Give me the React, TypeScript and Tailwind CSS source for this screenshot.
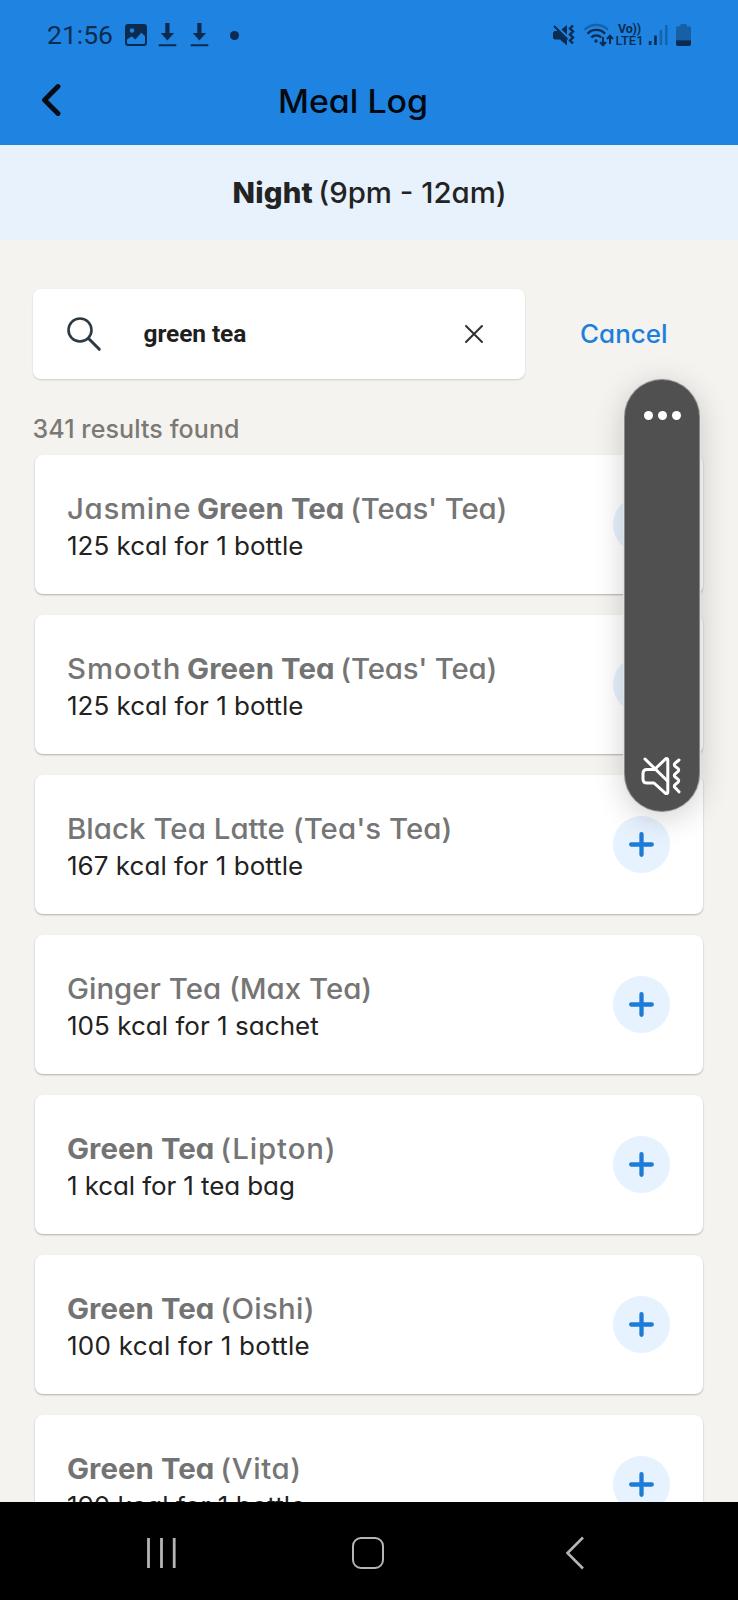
import type { ReactNode } from "react";

type Meal = { title: ReactNode; detail: string; tracking: string };

const Match = () => <b className="font-bold tracking-[0.05px] text-[#737373]">Green Tea</b>;

const meals: Meal[] = [
  {
    title: (
      <>
        <span className="tracking-[0.65px]">Jasmine</span>
        <Match />
        <span className="tracking-[-0.2px]">(Teas' Tea)</span>
      </>
    ),
    detail: "125 kcal for 1 bottle",
    tracking: "tracking-normal",
  },
  {
    title: (
      <>
        <span className="tracking-[0.95px]">Smooth</span>
        <Match />
        <span className="tracking-[-0.2px]">(Teas' Tea)</span>
      </>
    ),
    detail: "125 kcal for 1 bottle",
    tracking: "tracking-normal",
  },
  {
    title: <span className="tracking-[0.04px]">Black Tea Latte (Tea's Tea)</span>,
    detail: "167 kcal for 1 bottle",
    tracking: "tracking-[0.03px]",
  },
  {
    title: <span>Ginger Tea (Max Tea)</span>,
    detail: "105 kcal for 1 sachet",
    tracking: "tracking-[0.03px]",
  },
  {
    title: (
      <>
        <Match />
        <span className="tracking-[0.85px]">(Lipton)</span>
      </>
    ),
    detail: "1 kcal for 1 tea bag",
    tracking: "tracking-[-0.1px]",
  },
  {
    title: (
      <>
        <Match />
        <span className="tracking-[0.3px]">(Oishi)</span>
      </>
    ),
    detail: "100 kcal for 1 bottle",
    tracking: "tracking-[0.25px]",
  },
  {
    title: (
      <>
        <Match />
        <span className="tracking-[0.6px]">(Vita)</span>
      </>
    ),
    detail: "190 kcal for 1 bottle",
    tracking: "tracking-[0.05px]",
  },
];

function StatusBar() {
  return (
    <div className="flex h-[58px] items-center pt-[12px] pr-[47px] pl-[47px] text-[#0b2c50]">
      <span className="font-['Roboto',sans-serif] text-[26.500px] leading-none">21:56</span>
      <svg className="ml-[12px] h-[22px] w-[22px]" viewBox="0 0 22 22">
        <path
          fill="currentColor"
          fillRule="evenodd"
          d="M3 0h16a3 3 0 0 1 3 3v16a3 3 0 0 1-3 3H3a3 3 0 0 1-3-3V3a3 3 0 0 1 3-3ZM2 15.500V18.500a1.500 1.500 0 0 0 1.500 1.500h15a1.500 1.500 0 0 0 1.500-1.500V12l-3.700-3.200-6 6.700-3.600-3.200ZM7 4.200a2.300 2.300 0 1 0 0 4.600 2.300 2.300 0 0 0 0-4.600Z"
        />
      </svg>
      <div className="ml-[11px] flex gap-[13px]">
        {[0, 1].map((i) => (
          <svg key={i} className="h-[24px] w-[19px]" viewBox="0 0 19 24">
            <path fill="currentColor" d="M7.300 0h4.200v10H16l-6.600 7.500L2.800 10h4.500ZM.7 21.300h17.600v2H.7Z" />
          </svg>
        ))}
      </div>
      <span className="ml-[21px] h-[9px] w-[9px] rounded-full bg-[#0b2c50]" />

      <svg className="ml-auto h-[22px] w-[22px]" viewBox="0 0 22 22">
        <path fill="currentColor" d="M0 8.500 1.500 7H5L14 16v5.500L7 15.500H1.500L0 14ZM8.500 5.500 14 1v9.800Z" />
        <path d="m1 2 13.500 13.500" stroke="currentColor" strokeWidth="2" />
        <path d="m20 1.500-3 3 3 3-3 3 3 3-3 3 3 3" fill="none" stroke="currentColor" strokeWidth="2.400" />
      </svg>
      <svg className="ml-[8px] h-[24px] w-[31px]" viewBox="0 0 31 24" fill="none" stroke="currentColor">
        <path d="M1.500 6.700a16.500 16.500 0 0 1 23.500 0" strokeWidth="2.200" opacity=".4" />
        <path d="M4.500 10.700a12 12 0 0 1 17.500 0M8.300 14.500a7 7 0 0 1 10 0" strokeWidth="2.400" />
        <circle cx="13" cy="18" r="1.700" fill="currentColor" stroke="none" />
        <path d="M20 14v8M17 19l3 3.200 3-3.200M27 21v-8M24 16l3-3.200 3 3.200" strokeWidth="2" />
      </svg>
      <div className="ml-[2px] flex w-[27px] flex-col items-center font-['Roboto',sans-serif] text-[12.500px] leading-[12px] font-bold">
        <span className="tracking-[-0.2px] whitespace-nowrap">Vo))</span>
        <span className="text-[13px] font-medium">LTE1</span>
      </div>
      <svg className="ml-[5px] h-[22px] w-[20px]" viewBox="0 0 20 22" fill="currentColor">
        <path d="M.8 17h2.600v4H.8ZM6.200 11.500h2.600V21H6.200Z" />
        <path d="M11.600 6h2.600v15h-2.600ZM17 1h2.600v20H17Z" opacity=".35" />
      </svg>
      <svg className="ml-[8px] h-[22px] w-[15px]" viewBox="0 0 15 22" fill="currentColor">
        <path d="M4.500 0h6v2.200H13a2 2 0 0 1 2 2V16.200H0V4.200a2 2 0 0 1 2-2h2.500Z" opacity=".4" />
        <path d="M0 16.200h15V20a2 2 0 0 1-2 2H2a2 2 0 0 1-2-2Z" />
      </svg>
    </div>
  );
}

function MealCard({ meal }: { meal: Meal }) {
  return (
    <li className="flex h-[139px] shrink-0 items-center justify-between rounded-[8px] bg-white pr-[33px] pl-[32px] shadow-[0_1px_2px_rgba(0,0,0,0.28)]">
      <div className="pt-[6px]">
        <div className="flex h-[36px] origin-left scale-x-105 gap-[5.500px] text-[28px] leading-[36px] font-[450] whitespace-pre text-[#757575]">
          {meal.title}
        </div>
        <div className={`mt-px origin-left scale-x-104 text-[25px] leading-[36px] font-[370] whitespace-nowrap text-[#222] ${meal.tracking}`}>
          {meal.detail}
        </div>
      </div>
      <button className="flex h-[57px] w-[57px] items-center justify-center rounded-full bg-[#e6f2fe]">
        <svg className="h-[25px] w-[25px]" viewBox="0 0 25 25">
          <path d="M12.500 2.200v20.600M2.200 12.500h20.600" stroke="#1c7cd6" strokeWidth="4.300" strokeLinecap="round" />
        </svg>
      </button>
    </li>
  );
}

function VolumePanel() {
  return (
    <div className="absolute top-[380px] left-[625px] flex h-[431px] w-[74px] flex-col items-center justify-between rounded-full bg-[#505050] pt-[31px] pb-[16px] shadow-[0_0_0_1px_#8a8a8a,0_0_0_2px_rgba(225,225,225,0.9),0_6px_32px_rgba(0,0,0,0.2)]">
      <div className="flex gap-[5px]">
        <span className="h-[9px] w-[9px] rounded-full bg-white" />
        <span className="h-[9px] w-[9px] rounded-full bg-white" />
        <span className="h-[9px] w-[9px] rounded-full bg-white" />
      </div>
      <svg className="mr-[2px] h-[38px] w-[40px]" viewBox="0 0 40 38" fill="none" stroke="#fff" strokeWidth="3" strokeLinecap="round" strokeLinejoin="round">
        <path d="M14 12.500H6c-3 0-4 1.500-4 4v5.500c0 2.500 1 4 4 4h7L24.500 36.300c1 .8 2.300.3 2.300-1V3c0-1.300-1.300-1.800-2.300-1L13.500 12.500" />
        <path d="M4 2 26.500 24" />
        <path d="m38 3-3.800 3.200q-1.800 1.600 0 3.200l2.600 2q1.800 1.600 0 3.200l-2.600 2.200q-1.800 1.600 0 3.200l2.600 2.200q1.800 1.600 0 3.200l-2.600 2.200q-1.800 1.600 0 3.200L38 34.800" />
      </svg>
    </div>
  );
}

export default function App() {
  return (
    <div className="relative flex h-[1600px] w-[738px] flex-col overflow-hidden bg-[#f4f3ef] font-['Inter',sans-serif] [font-feature-settings:'cv11','ss03']">
      <header className="h-[145px] shrink-0 bg-[#1e83e1]">
        <StatusBar />
        <div className="grid h-[87px] grid-cols-[84px_1fr_116px] items-center">
          <svg className="mt-[-4px] ml-[40px] h-[34px] w-[21px]" viewBox="0 0 21 34">
            <path d="M18 3.500 4.500 17 18 30.500" fill="none" stroke="#060b14" strokeWidth="4.900" strokeLinecap="round" strokeLinejoin="round" />
          </svg>
          <h1 className="scale-x-106 text-center text-[32px] leading-none font-medium text-[#04080f]">Meal Log</h1>
        </div>
      </header>

      <div className="flex h-[95px] shrink-0 items-center justify-center bg-[#e7f2fd] pl-[2px] text-[28px] leading-[36px] text-[#232323]">
        <p className="flex scale-x-105 gap-[5px]">
          <b className="font-extrabold tracking-[0.2px]">Night</b>
          <span className="font-[480]">(9pm - 12am)</span>
        </p>
      </div>

      <main className="flex min-h-0 flex-1 flex-col overflow-hidden px-[33px] pt-[49px]">
        <div className="flex h-[90px] shrink-0 items-center">
          <div className="flex h-[90px] w-[492px] items-center rounded-[8px] bg-white pr-[41px] pl-[33px] shadow-[0_1px_2px_rgba(0,0,0,0.16)]">
            <svg className="mt-[-1px] h-[36px] w-[36px]" viewBox="0 0 36 36" fill="none" stroke="#2b3a44" strokeWidth="2.600" strokeLinecap="round">
              <circle cx="14" cy="14" r="11.500" />
              <path d="m22.300 22.300 11 11" strokeWidth="3" />
            </svg>
            <span className="ml-[41.500px] font-['Roboto',sans-serif] text-[24.500px] leading-none font-bold tracking-[-0.1px] text-[#1f1f1f]">green tea</span>
            <svg className="ml-auto h-[20px] w-[20px]" viewBox="0 0 20 20">
              <path d="m2 2 16 16M18 2 2 18" stroke="#303030" strokeWidth="2" strokeLinecap="round" />
            </svg>
          </div>
          <button className="ml-[55px] origin-left scale-x-102 text-[25.500px] leading-none font-medium text-[#1c7fdb]">Cancel</button>
        </div>

        <p className="mt-[32px] -ml-[0.500px] h-[36px] shrink-0 text-[25px] leading-[36px] font-medium tracking-[0.1px] text-[#7b7974]">341 results found</p>

        <ul className="mt-[8px] mr-[2px] ml-[2px] flex flex-col gap-[21px]">
          {meals.map((meal, i) => (
            <MealCard key={i} meal={meal} />
          ))}
        </ul>
      </main>

      <nav className="flex h-[98px] shrink-0 items-center bg-black pt-[3px] text-[#b4b4b4]">
        <svg className="ml-[146px] h-[32px] w-[31px]" viewBox="0 0 31 32">
          <path d="M2.500 1v30M15.500 1v30M28.200 1v30" stroke="currentColor" strokeWidth="2.800" />
        </svg>
        <span className="ml-[175px] h-[32px] w-[32px] rounded-[9px] border-[2.500px] border-[#b4b4b4]" />
        <svg className="ml-[181px] h-[34px] w-[20px]" viewBox="0 0 20 34">
          <path d="M18 1.500 2.500 17 18 32.500" fill="none" stroke="currentColor" strokeWidth="2.600" />
        </svg>
      </nav>

      <VolumePanel />
    </div>
  );
}
